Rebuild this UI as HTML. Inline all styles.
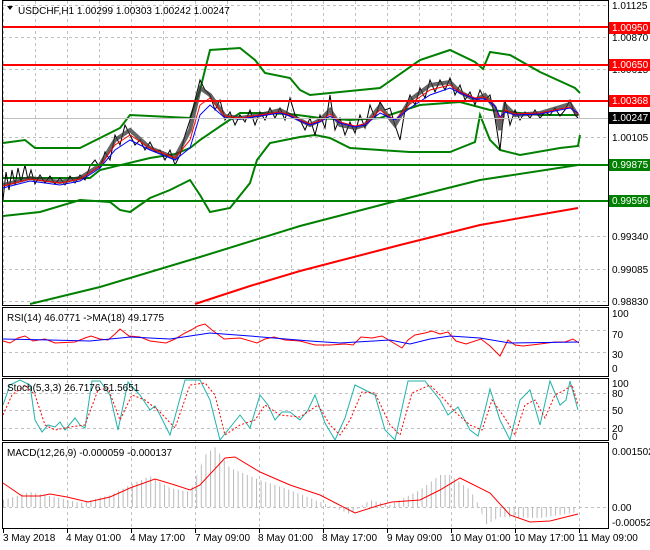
<!DOCTYPE html>
<html><head><meta charset="utf-8"><style>
html,body{margin:0;padding:0;background:#fff;width:650px;height:550px;overflow:hidden}
svg{display:block;font-family:"Liberation Sans",Tahoma,sans-serif}
</style></head><body>
<svg width="650" height="550" xmlns="http://www.w3.org/2000/svg">
<defs>
<pattern id="hb" x="3" y="0" width="4.6" height="10" patternUnits="userSpaceOnUse">
<rect x="0" y="0" width="1" height="10" fill="#b8b8b8"/>
</pattern>
</defs>
<rect width="650" height="550" fill="#fff"/>
<g stroke="#c0c0c0" stroke-dasharray="3,3" fill="none">
<path d="M3.5 1V305M35.5 1V305M67.5 1V305M99.5 1V305M131.5 1V305M163.5 1V305M195.5 1V305M227.5 1V305M259.5 1V305M291.5 1V305M323.5 1V305M355.5 1V305M387.5 1V305M419.5 1V305M451.5 1V305M483.5 1V305M515.5 1V305M547.5 1V305M579.5 1V305"/>
<path d="M67.5 308V529M131.5 308V529M195.5 308V529M259.5 308V529M323.5 308V529M387.5 308V529M451.5 308V529M515.5 308V529M579.5 308V529"/>
<path d="M3 5.5H608M3 37.5H608M3 69.5H608M3 137.5H608M3 236.5H608M3 269.5H608M3 301.5H608M3 330.5H608M3 352.5H608M3 393.5H608M3 410.5H608M3 428.5H608M3 507.5H608"/>
</g>
<g stroke="#000"><path d="M3.5 529V533M67.5 529V533M131.5 529V533M195.5 529V533M259.5 529V533M323.5 529V533M387.5 529V533M451.5 529V533M515.5 529V533M579.5 529V533"/></g>
<!-- MACD histogram -->
<polygon fill="url(#hb)" points="3,507 3,500 30,492 60,498 80,503 110,495 130,485 150,476 170,488 190,492 205,455 215,447 230,468 260,480 290,490 320,502 340,510 350,514 370,500 390,505 420,490 440,475 450,475 470,490 480,507 485,525 500,517 540,518 578,512 578,507"/>
<polyline fill="none" stroke="#f00" points="3,483 22,496 40,496 50,494 67,497 88,502 110,497 130,488 155,479 175,485 190,490 200,485 225,458 235,457 260,472 290,485 320,495 355,513 380,505 392,502 420,500 440,490 460,478 490,493 510,515 530,522 550,521 578,514"/>
<!-- RSI -->
<polyline fill="none" stroke="#f00" points="3,341 10,343 18,338 25,336 33,341 45,339 55,343 75,342 85,338 91,336 100,339 108,340 115,334 120,329 129,336 140,337 150,341 166,343 175,339 185,333 191,330 198,326 205,324 212,330 224,339 240,338 257,343 265,339 274,337 285,340 300,341 315,345 330,345 345,344 353,345 361,337 372,338 382,336 392,342 402,348 408,340 415,335 425,333 432,331 440,334 448,332 456,341 466,344 481,339 490,346 500,356 508,340 515,345 523,346 540,344 555,342 565,342 573,339 579,343"/>
<polyline fill="none" stroke="#00f" points="3,339 50,340 90,341 130,337 170,339 210,333 250,336 310,341 340,343 390,340 410,344 430,339 450,336 480,338 510,343 579,342"/>
<!-- Stoch -->
<polyline fill="none" stroke="#20b2aa" points="3,405 10,385 20,380 30,385 35,420 42,432 48,425 55,427 60,422 65,430 75,418 80,425 85,428 92,381 100,381 110,395 118,430 128,382 140,395 150,410 155,406 160,415 170,435 185,380 200,380 210,400 220,440 240,415 250,428 260,395 268,405 275,420 282,412 290,412 300,420 308,410 315,395 325,423 335,440 345,418 355,385 365,390 375,395 385,430 395,440 408,381 425,381 440,400 448,415 458,407 470,430 478,436 485,410 490,389 500,420 510,440 520,400 530,390 540,425 550,381 560,405 566,400 570,381 578,410"/>
<polyline fill="none" stroke="#f00" stroke-dasharray="2,2" points="3,415 12,395 25,385 35,395 45,425 55,430 70,427 85,425 98,390 108,388 120,420 132,395 145,400 160,412 175,428 190,385 205,383 215,395 225,435 240,425 255,420 265,405 280,415 300,417 318,405 330,425 340,435 350,420 362,392 375,393 390,425 400,435 412,393 430,385 445,400 455,412 470,425 482,430 492,400 505,418 515,435 525,405 535,400 545,418 555,395 565,390 572,385 578,405"/>
<!-- Main MAs -->
<polyline fill="none" stroke="#008000" stroke-width="2" points="30,304 100,287 200,257 300,226 400,200 480,180 578,165"/>
<polyline fill="none" stroke="#f00" stroke-width="2" points="195,304 250,286 300,271 400,245 480,225 578,208"/>
<polyline fill="none" stroke="#008000" stroke-width="2" points="3,143 25,140 35,148 80,148 120,128 130,115 190,118 200,90 210,50 240,48 255,60 265,73 290,78 300,90 310,95 340,92 380,88 420,60 450,50 475,62 483,69 490,52 510,55 540,72 575,88 580,93"/>
<polyline fill="none" stroke="#008000" stroke-width="2" points="3,216 40,212 80,200 110,202 120,210 130,212 150,198 170,190 190,180 200,195 210,212 230,208 250,183 257,160 270,143 300,137 315,135 330,138 350,148 380,150 410,152 450,152 475,142 480,115 490,140 500,150 520,155 560,148 578,146 580,135"/>
<polyline fill="none" stroke="#008000" stroke-width="2" points="3,178 90,178 100,170 150,158 175,154 190,148 200,140 225,123 240,113 260,113 290,114 320,118 350,120 380,118 420,105 460,102 490,110 510,112 540,115 578,115"/>
<!-- price (candles approximated) -->
<polyline fill="none" stroke="#000" stroke-width="1" points="3,200 6,172 9,190 12,170 15,185 18,168 21,182 25,165 28,180 31,170 35,184 40,175 45,183 50,176 55,184 60,178 65,185 70,176 75,183 80,175 85,180 90,166 95,160 100,168 105,152 110,160 115,135 120,145 125,125 130,135 135,145 140,140 145,150 150,142 155,152 160,150 165,160 170,150 175,165 180,155 185,135 190,120 195,100 200,80 205,90 210,95 215,110 220,100 225,120 230,112 235,125 240,115 245,122 250,110 255,125 260,112 265,120 270,108 275,118 280,108 285,120 290,98 295,115 300,120 305,130 310,118 315,135 320,115 325,128 330,95 335,130 340,118 345,135 350,122 355,133 360,115 365,128 370,105 375,118 380,102 385,110 390,108 395,125 400,140 405,110 410,95 415,105 420,88 425,98 430,80 435,92 440,80 445,90 450,78 455,95 460,85 465,100 470,92 475,105 480,90 485,100 490,95 495,118 500,150 505,100 510,125 515,110 520,120 525,112 530,118 535,110 540,118 545,112 550,115 555,108 560,116 565,110 570,100 575,115 578,118"/>
<polyline fill="none" stroke="#333" stroke-width="4" opacity="0.75" points="3,185 30,178 60,182 80,178 100,165 115,140 130,130 150,148 175,158 190,130 200,88 210,95 225,116 240,118 260,115 280,110 290,115 300,120 310,125 320,120 330,110 340,125 355,128 365,125 380,106 395,125 410,100 430,85 450,82 460,92 475,100 485,95 495,108 500,130 505,105 515,115 540,113 570,104 578,116"/>
<polyline fill="none" stroke="#f00" points="3,186 30,179 60,183 80,179 100,166 115,145 130,135 150,148 175,158 190,140 200,105 210,98 225,116 240,118 260,115 280,112 290,115 300,120 310,124 320,121 330,114 340,122 355,126 365,124 380,110 395,120 410,104 430,90 450,85 460,92 475,98 485,97 495,106 500,120 505,110 515,114 540,113 570,107 578,114"/>
<polyline fill="none" stroke="#00f" points="3,188 30,181 60,185 80,181 100,168 115,150 130,140 150,150 175,160 190,148 200,115 210,105 225,118 240,119 260,116 280,113 290,116 300,121 310,125 320,122 330,116 340,123 355,127 365,125 380,113 395,120 410,108 430,95 450,88 460,93 475,99 485,99 495,106 500,117 505,112 515,115 540,114 570,108 578,113"/>
<!-- levels -->
<g stroke-width="2">
<line x1="3" y1="27" x2="608" y2="27" stroke="#f00"/>
<line x1="3" y1="65" x2="608" y2="65" stroke="#f00"/>
<line x1="3" y1="101" x2="608" y2="101" stroke="#f00"/>
<line x1="3" y1="165" x2="608" y2="165" stroke="#008000"/>
<line x1="3" y1="201" x2="608" y2="201" stroke="#008000"/>
</g>
<line x1="3" y1="118.5" x2="608" y2="118.5" stroke="#c0c0c0"/>
<!-- borders -->
<g fill="none" stroke="#000" stroke-width="1">
<rect x="2.5" y="0.5" width="606" height="305"/>
<rect x="2.5" y="307.5" width="606" height="69"/>
<rect x="2.5" y="378.5" width="606" height="62"/>
<rect x="2.5" y="442.5" width="606" height="86"/>
</g>
<g font-size="10" fill="#000">
<text x="612" y="9">1.01125</text>
<text x="612" y="41">1.00870</text>
<text x="612" y="73">1.00615</text>
<text x="612" y="141">1.00105</text>
<text x="612" y="240">0.99340</text>
<text x="612" y="273">0.99085</text>
<text x="612" y="305">0.98830</text>
<rect x="609" y="22" width="41" height="12" fill="#f00"/><text x="612" y="31" fill="#fff">1.00950</text>
<rect x="609" y="59" width="41" height="12" fill="#f00"/><text x="612" y="68" fill="#fff">1.00650</text>
<rect x="609" y="95" width="41" height="12" fill="#f00"/><text x="612" y="104" fill="#fff">1.00368</text>
<rect x="609" y="112" width="41" height="12" fill="#000"/><text x="612" y="121" fill="#fff">1.00247</text>
<rect x="609" y="159" width="41" height="12" fill="#008000"/><text x="612" y="168" fill="#fff">0.99875</text>
<rect x="609" y="195" width="41" height="12" fill="#008000"/><text x="612" y="204" fill="#fff">0.99596</text>
<text x="612" y="317">100</text>
<text x="612" y="338">70</text>
<text x="612" y="358">30</text>
<text x="612" y="372">0</text>
<text x="612" y="387">100</text>
<text x="612" y="397">80</text>
<text x="612" y="414">50</text>
<text x="612" y="432">20</text>
<text x="612" y="440">0</text>
<text x="612" y="455">0.001502</text>
<text x="612" y="511">0.00</text>
<text x="612" y="526">-0.000521</text>
<text x="3" y="541">3 May 2018</text>
<text x="66" y="541">4 May 01:00</text>
<text x="130" y="541">4 May 17:00</text>
<text x="195" y="541">7 May 09:00</text>
<text x="258" y="541">8 May 01:00</text>
<text x="322" y="541">8 May 17:00</text>
<text x="387" y="541">9 May 09:00</text>
<text x="450" y="541">10 May 01:00</text>
<text x="514" y="541">10 May 17:00</text>
<text x="578" y="541">11 May 09:00</text>
<path d="M7 6 L13 6 L10 10 Z" fill="#000"/>
<text x="18" y="14">USDCHF,H1  1.00299 1.00303 1.00242 1.00247</text>
<text x="7" y="321">RSI(14) 46.0771  -&gt;MA(18) 49.1775</text>
<text x="7" y="391">Stoch(5,3,3) 26.7176 51.5651</text>
<text x="7" y="456">MACD(12,26,9) -0.000059 -0.000137</text>
</g>
</svg>
</body></html>
